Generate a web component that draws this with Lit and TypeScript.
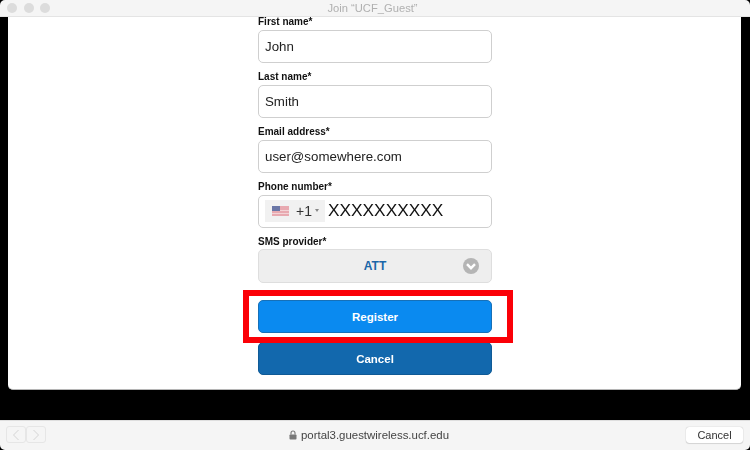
import { LitElement, html, css } from "lit";
import { customElement } from "lit/decorators.js";

@customElement("app-root")
export class AppRoot extends LitElement {
  static styles = css`
    :host { display: block; width: 750px; height: 450px; background: #000; font-family: "Liberation Sans", Arial, sans-serif; overflow: hidden; }
    .window { height: 450px; display: flex; flex-direction: column; border-radius: 5px; overflow: hidden; filter: blur(0.4px); }
    .titlebar { height: 16px; flex: none; background: #f5f5f5; border-bottom: 1px solid #e4e4e4; display: flex; align-items: center; position: relative; padding-left: 7px; gap: 6.5px; }
    .light { width: 10px; height: 10px; border-radius: 50%; background: #dcdcdc; }
    .title { position: absolute; left: 0; right: 5px; top: 0; text-align: center; font-size: 11.2px; line-height: 17px; color: #b0b0b0; }
    .body { flex: 1; background: #000; padding: 0 9px 30px 8px; display: flex; flex-direction: column; }
    .card { flex: 1; background: #fff; border-radius: 0 0 5px 5px; border-bottom: 1px solid #b5b5b5; display: flex; justify-content: center; }
    .form { width: 234px; margin-left: 1px; display: flex; flex-direction: column; }
    .field { display: flex; flex-direction: column; margin-bottom: 9px; }
    label { font-size: 10px; font-weight: 700; line-height: 9px; margin-bottom: 4px; color: #111; }
    .input { box-sizing: border-box; height: 33px; border: 1px solid #cfcfcf; border-radius: 5px; background: #fff; display: flex; align-items: center; padding: 0 0 1px 6px; font-size: 13.3px; color: #222; }
    .phone { padding: 0 0 0 6px; }
    .chip { width: 60px; height: 22px; margin-top: -1px; background: #f1f1f1; display: flex; align-items: center; padding: 0 0 1px 7px; box-sizing: border-box; gap: 7px; font-size: 14px; color: #333; }
    .caret { width: 0; height: 0; border-left: 2.5px solid transparent; border-right: 2.5px solid transparent; border-top: 3px solid #888; margin-left: -4px; }
    .xs { font-size: 17.3px; color: #111; margin: -2px 0 0 3px; }
    .select { box-sizing: border-box; height: 34px; margin-top: -1px; border: 1px solid #dedede; border-radius: 5px; background: #eeeeee; display: flex; align-items: center; justify-content: center; position: relative; font-size: 12px; font-weight: 700; color: #1a66a8; }
    .chev { position: absolute; right: 12px; top: 8px; }
    .btn { box-sizing: border-box; height: 33px; border-radius: 5px; display: flex; align-items: center; justify-content: center; color: #fff; font-size: 11.5px; font-weight: 700; }
    .register { background: #0a8af0; border: 1px solid #1670b8; margin-top: 8px; position: relative; }
    .cancel { background: #1268ad; border: 1px solid #0f5a96; margin-top: 9px; }
    .highlight { position: absolute; left: -16px; right: -22px; top: -11px; bottom: -11px; border: 6.5px solid #fb0007; z-index: 2; pointer-events: none; }
    .footer { flex: none; height: 30px; background: #f5f5f5; border-top: 1px solid #dedede; box-sizing: border-box; display: flex; align-items: center; position: relative; padding: 0 7px 0 6px; }
    .nav { display: flex; margin-top: -2px; }
    .navbtn { box-sizing: border-box; width: 20px; height: 17px; border: 1px solid #e6e6e6; border-radius: 3px; display: flex; align-items: center; justify-content: center; }
    .url { position: absolute; left: 0; right: 12px; top: 0; height: 28px; display: flex; align-items: center; justify-content: center; gap: 4px; font-size: 11.45px; color: #444; }
    .close { margin-left: auto; margin-top: -1px; box-sizing: border-box; width: 57px; height: 16px; background: #fff; border-radius: 3px; box-shadow: 0 0 1px rgba(0,0,0,.35), 0 1px 1px rgba(0,0,0,.1); display: flex; align-items: center; justify-content: center; font-size: 11px; color: #333; position: relative; }
  `;

  render() {
    return html`
      <div class="window">
        <div class="titlebar">
          <span class="light"></span><span class="light"></span><span class="light"></span>
          <div class="title">Join “UCF_Guest”</div>
        </div>
        <div class="body">
          <div class="card">
            <div class="form">
              <div class="field"><label>First name*</label><div class="input">John</div></div>
              <div class="field"><label>Last name*</label><div class="input">Smith</div></div>
              <div class="field"><label>Email address*</label><div class="input">user@somewhere.com</div></div>
              <div class="field">
                <label>Phone number*</label>
                <div class="input phone">
                  <div class="chip">
                    <svg width="17" height="10" viewBox="0 0 17 10">
                      <rect width="17" height="10" fill="#e8a9b0"/>
                      <rect y="4" width="17" height="1" fill="#f3d3d6"/>
                      <rect y="7" width="17" height="1" fill="#f3d3d6"/>
                      <rect width="8" height="5" fill="#6a76a6"/>
                    </svg>
                    <span>+1</span><span class="caret"></span>
                  </div>
                  <span class="xs">XXXXXXXXXX</span>
                </div>
              </div>
              <div class="field">
                <label>SMS provider*</label>
                <div class="select">
                  ATT
                  <svg class="chev" width="16" height="16" viewBox="0 0 16 16">
                    <circle cx="8" cy="8" r="8" fill="#b5b5b5"/>
                    <path d="M4 6.2 L8 10.2 L12 6.2" fill="none" stroke="#fff" stroke-width="2.4"/>
                  </svg>
                </div>
              </div>
              <div class="btn register">Register<div class="highlight"></div></div>
              <div class="btn cancel">Cancel</div>
            </div>
          </div>
        </div>
        <div class="footer">
          <div class="nav">
            <div class="navbtn"><svg width="8" height="12" viewBox="0 0 8 12"><path d="M6.5 1 L1.5 6 L6.5 11" fill="none" stroke="#d4d4d4" stroke-width="1"/></svg></div>
            <div class="navbtn"><svg width="8" height="12" viewBox="0 0 8 12"><path d="M1.5 1 L6.5 6 L1.5 11" fill="none" stroke="#d4d4d4" stroke-width="1"/></svg></div>
          </div>
          <div class="url">
            <svg width="8" height="10" viewBox="0 0 8 10">
              <path d="M2 4.5 V3 a2 2 0 0 1 4 0 V4.5" fill="none" stroke="#777" stroke-width="1.1"/>
              <rect x="0.5" y="4.5" width="7" height="5" rx="0.8" fill="#777"/>
            </svg>
            <span>portal3.guestwireless.ucf.edu</span>
          </div>
          <div class="close">Cancel</div>
        </div>
      </div>
    `;
  }
}
